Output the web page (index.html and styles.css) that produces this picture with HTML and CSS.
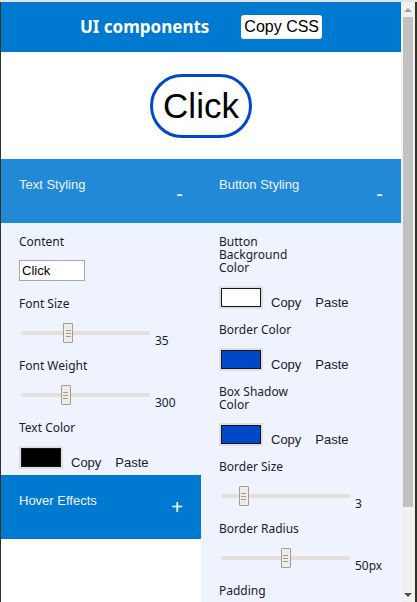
FILE: index.html
```html
<!DOCTYPE html>
<html>
<head>
<meta charset="utf-8">
<title>UI components</title>
<link rel="stylesheet" href="styles.css">
</head>
<body>
<div class="screen">
  <div class="window">
    <div class="app">
      <header class="topbar">
        <h1 class="title">UI components</h1>
        <button class="copy-css">Copy CSS</button>
      </header>
      <section class="preview">
        <button class="demo">Click</button>
      </section>
      <div class="panels">
        <div class="col col-left">
          <div class="acc-head open"><span class="acc-title">Text Styling</span><span class="sign minus">-</span></div>
          <div class="acc-body">
            <div class="field">
              <label class="lbl">Content</label>
              <div class="row row-top"><input class="text-in" type="text" value="Click"></div>
            </div>
            <div class="field">
              <label class="lbl">Font Size</label>
              <div class="row"><input class="slider" type="range" min="10" max="80" value="35"><span class="val">35</span></div>
            </div>
            <div class="field">
              <label class="lbl">Font Weight</label>
              <div class="row"><input class="slider" type="range" min="100" max="700" value="300"><span class="val">300</span></div>
            </div>
            <div class="field">
              <label class="lbl">Text Color</label>
              <div class="row"><span class="swatch"><span class="swatch-fill fill-black"></span></span><button class="link copy">Copy</button><button class="link paste">Paste</button></div>
            </div>
          </div>
          <div class="acc-head"><span class="acc-title">Hover Effects</span><span class="sign">+</span></div>
        </div>
        <div class="col col-right">
          <div class="acc-head open"><span class="acc-title">Button Styling</span><span class="sign minus">-</span></div>
          <div class="acc-body grow">
            <div class="field">
              <label class="lbl">Button Background Color</label>
              <div class="row"><span class="swatch"><span class="swatch-fill fill-white"></span></span><button class="link copy">Copy</button><button class="link paste">Paste</button></div>
            </div>
            <div class="field">
              <label class="lbl">Border Color</label>
              <div class="row"><span class="swatch"><span class="swatch-fill fill-blue"></span></span><button class="link copy">Copy</button><button class="link paste">Paste</button></div>
            </div>
            <div class="field">
              <label class="lbl">Box Shadow Color</label>
              <div class="row"><span class="swatch"><span class="swatch-fill fill-blue"></span></span><button class="link copy">Copy</button><button class="link paste">Paste</button></div>
            </div>
            <div class="field">
              <label class="lbl">Border Size</label>
              <div class="row"><input class="slider" type="range" min="0" max="20" value="3"><span class="val">3</span></div>
            </div>
            <div class="field">
              <label class="lbl">Border Radius</label>
              <div class="row"><input class="slider" type="range" min="0" max="100" value="50"><span class="val">50px</span></div>
            </div>
            <div class="field">
              <label class="lbl">Padding</label>
            </div>
          </div>
        </div>
      </div>
    </div>
    <div class="scrollbar">
      <div class="sb-btn"><span class="arrow-up"></span></div>
      <div class="sb-thumb"></div>
      <div class="sb-space"></div>
      <div class="sb-btn"><span class="arrow-down"></span></div>
    </div>
  </div>
</div>
</body>
</html>
```

FILE: styles.css
```css
* { box-sizing: border-box; }

html, body {
  margin: 0;
  padding: 0;
  background: #2f3424;
  width: 417px;
  height: 602px;
  overflow: hidden;
}

.screen {
  border-top: 2px solid #e4e4e4;
  height: 602px;
}

.window {
  display: flex;
  margin-left: 1px;
  width: 414px;
  height: 600px;
  background: #ffffff;
}

.app {
  width: 400px;
  height: 600px;
  overflow: hidden;
  display: flex;
  flex-direction: column;
  background: #ffffff;
}

/* top bar */
.topbar {
  height: 50px;
  flex: none;
  background: #0079d1;
  display: flex;
  align-items: center;
  justify-content: center;
  gap: 32px;
}

.title {
  margin: 0;
  color: #ffffff;
  font-family: "Noto Sans", sans-serif;
  font-weight: 700;
  font-size: 17px;
  line-height: 24px;
}

.copy-css {
  font-family: "Liberation Sans", Arial, sans-serif;
  font-size: 16px;
  line-height: 18px;
  padding: 3px 3px;
  height: 24px;
  border: none;
  border-radius: 3px;
  background: #ffffff;
  color: #000000;
}

/* preview */
.preview {
  height: 107px;
  flex: none;
  display: flex;
  align-items: center;
  justify-content: center;
}

.demo {
  font-family: "Liberation Sans", Arial, sans-serif;
  font-size: 35px;
  font-weight: 300;
  color: #000000;
  background: #ffffff;
  border: 3px solid #0048c8;
  border-radius: 50px;
  padding: 9px 10px;
  line-height: normal;
}

/* panels */
.panels {
  flex: 1;
  display: grid;
  grid-template-columns: 200px 200px;
  min-height: 0;
}

.col {
  display: flex;
  flex-direction: column;
  background: #ffffff;
  min-height: 0;
}

.acc-head {
  height: 64px;
  flex: none;
  background: #0079d1;
  color: #eef4fc;
  display: flex;
  justify-content: space-between;
  align-items: flex-start;
  padding: 0 18px;
  font-family: "Liberation Sans", Arial, sans-serif;
}

.acc-head.open {
  background: #2189d6;
}

.acc-title {
  margin-top: 18px;
  font-size: 13px;
  line-height: 15px;
}

.sign {
  margin-top: 22px;
  font-size: 20px;
  line-height: 20px;
  color: #ffffff;
}

.sign.minus {
  margin-top: 25px;
}

.acc-body {
  flex: none;
  background: #eff3fd;
  padding: 12px 18px 6px;
  display: flex;
  flex-direction: column;
  gap: 14px;
}

.acc-body.grow {
  flex: 1;
}

.field {
  display: flex;
  flex-direction: column;
}

.lbl {
  display: block;
  width: 85px;
  font-family: "Noto Sans", sans-serif;
  font-size: 12px;
  line-height: 13px;
  color: #1b1b2c;
}

.row {
  margin-top: 12px;
  height: 23px;
  display: flex;
  align-items: flex-end;
}

.row-top {
  align-items: flex-start;
}

.text-in {
  width: 66px;
  height: 21px;
  margin: 0;
  padding: 1px 2px;
  border: 1px solid #a8a8a8;
  background: #ffffff;
  font-family: "Liberation Sans", Arial, sans-serif;
  font-size: 13px;
  color: #000000;
  outline: none;
}

/* slider */
.slider {
  -webkit-appearance: none;
  appearance: none;
  width: 129px;
  height: 20px;
  margin: 0 0 1px 2px;
  align-self: center;
  background: transparent;
}

.slider::-webkit-slider-runnable-track {
  height: 4px;
  background: #e4dfd9;
  border-radius: 1px;
}

.slider::-webkit-slider-thumb {
  -webkit-appearance: none;
  appearance: none;
  width: 10px;
  height: 20px;
  margin-top: -8px;
  border: 1px solid #a29c94;
  border-radius: 1px;
  background-color: #efebe6;
  background-image: repeating-linear-gradient(to bottom, #a29c94 0 1px, transparent 1px 3px);
  background-size: 5px 7px;
  background-position: center;
  background-repeat: no-repeat;
}

.val {
  margin-left: 5px;
  margin-bottom: -2px;
  font-family: "Noto Sans", sans-serif;
  font-size: 12px;
  line-height: 12px;
  color: #1b1b2c;
}

/* colour swatch */
.swatch {
  width: 44px;
  height: 23px;
  padding: 2px 2px;
  background: #dfdfdf;
  display: block;
}

.swatch-fill {
  display: block;
  width: 100%;
  height: 100%;
  border: 1px solid #151515;
}

.fill-black { background: #000000; }
.fill-white { background: #ffffff; }
.fill-blue { background: #0048c8; }

.link {
  border: none;
  background: none;
  padding: 0;
  font-family: "Liberation Sans", Arial, sans-serif;
  font-size: 13px;
  line-height: 13px;
  color: #1b1b2c;
}

.copy { margin-left: 8px; }
.paste { margin-left: 14px; }

/* scrollbar */
.scrollbar {
  width: 14px;
  height: 600px;
  background: #f1f1f1;
  display: flex;
  flex-direction: column;
  align-items: center;
}

.sb-btn {
  height: 15px;
  width: 14px;
  flex: none;
  display: flex;
  align-items: center;
  justify-content: center;
}

.arrow-up {
  width: 0;
  height: 0;
  border-left: 4px solid transparent;
  border-right: 4px solid transparent;
  border-bottom: 4px solid #a3a3a3;
}

.arrow-down {
  width: 0;
  height: 0;
  border-left: 4px solid transparent;
  border-right: 4px solid transparent;
  border-top: 4px solid #505050;
}

.sb-thumb {
  width: 10px;
  height: 490px;
  flex: none;
  background: #c1c1c1;
}

.sb-space {
  flex: 1;
}
```
